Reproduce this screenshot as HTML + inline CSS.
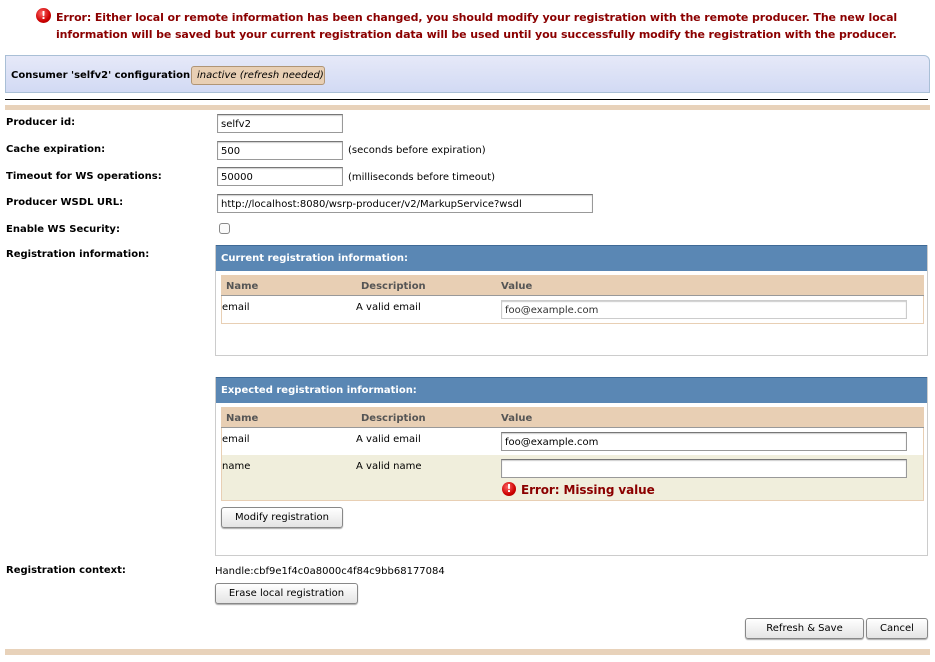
<!DOCTYPE html>
<html><head><meta charset="utf-8"><style>
*{box-sizing:border-box;margin:0;padding:0}
body{width:935px;height:662px;background:#fff;position:relative;font-family:"DejaVu Sans","Liberation Sans",sans-serif;font-size:10px;color:#000;overflow:hidden}
.a{position:absolute;white-space:nowrap}
.b{font-weight:bold}
.lbl{position:absolute;left:6px;font-weight:bold;font-size:10px;white-space:nowrap}
.inp{position:absolute;border:1px solid #999;border-top-color:#777;background:#fff;height:19px;font-size:10px;padding:4px 3px 0;white-space:nowrap;box-shadow:inset 0 1px 1px #ccc}
.btn{position:absolute;border:1px solid #888;border-radius:3px;background:linear-gradient(#fff,#e4e4e4);font-size:10px;text-align:center;line-height:19px;height:21px;box-shadow:0 1px 1px #aaa}
.icon{position:absolute;width:15px;height:15px;border-radius:50%;background:radial-gradient(circle at 40% 35%,#f66,#c00 60%,#900);color:#fff;font-weight:bold;font-size:11px;text-align:center;line-height:15px}
.err{color:#8b0000;font-weight:bold;font-size:11px;letter-spacing:-0.1px}
.panel{position:absolute;left:215px;width:713px;border:1px solid #ccc;border-top:none}
.ph{height:26px;background:#5a87b4;border-top:1px solid #3f6a96;color:#fff;font-weight:bold;padding:7px 5px 0}
.th{position:absolute;left:5px;width:703px;height:21px;background:#e8cfb4;border-bottom:1px solid #999;color:#555;font-weight:bold}
.th span,.tr span{position:absolute;top:6px}
.tr{position:absolute;left:5px;width:703px;border-left:1px solid #e8cfb4;border-right:1px solid #e8cfb4}
</style></head><body>
<div class="icon" style="left:36px;top:8px">!</div>
<div class="a err" style="left:56px;top:11px">Error: Either local or remote information has been changed, you should modify your registration with the remote producer. The new local</div>
<div class="a err" style="left:56px;top:28px">information will be saved but your current registration data will be used until you successfully modify the registration with the producer.</div>

<div class="a" style="left:5px;top:55px;width:925px;height:38px;border:1px solid #a9bfd6;border-radius:0 6px 0 0;background:linear-gradient(#e6e9f8,#d2daf4)"></div>
<div class="a b" style="left:11px;top:70px">Consumer 'selfv2' configuration</div>
<div class="a" style="left:191px;top:66px;width:134px;height:19px;background:#e8cfb4;border:1px solid #b09575;border-radius:3px;font-style:italic;padding:3px 0 0 5px">inactive (refresh needed)</div>
<div class="a" style="left:5px;top:99px;width:923px;height:1px;background:#000"></div>
<div class="a" style="left:5px;top:105px;width:925px;height:5px;background:#e8d2ba"></div>

<div class="lbl" style="top:117px">Producer id:</div>
<div class="inp" style="left:217px;top:114px;width:126px">selfv2</div>
<div class="lbl" style="top:144px">Cache expiration:</div>
<div class="inp" style="left:217px;top:141px;width:126px">500</div>
<div class="a" style="left:348px;top:145px">(seconds before expiration)</div>
<div class="lbl" style="top:171px">Timeout for WS operations:</div>
<div class="inp" style="left:217px;top:167px;width:126px">50000</div>
<div class="a" style="left:348px;top:172px">(milliseconds before timeout)</div>
<div class="lbl" style="top:197px">Producer WSDL URL:</div>
<div class="inp" style="left:217px;top:194px;width:376px">http://localhost:8080/wsrp-producer/v2/MarkupService?wsdl</div>
<div class="lbl" style="top:224px">Enable WS Security:</div>
<div class="a" style="left:219px;top:223px;width:11px;height:11px;border:1px solid #888;border-radius:3px;background:#fafafa"></div>
<div class="lbl" style="top:249px">Registration information:</div>

<div class="panel" style="top:245px;height:111px">
<div class="ph">Current registration information:</div>
<div class="th" style="top:30px"><span style="left:5px">Name</span><span style="left:140px">Description</span><span style="left:280px">Value</span></div>
<div class="tr" style="top:51px;height:28px;border-bottom:1px solid #e8cfb4"><span style="left:0">email</span><span style="left:134px">A valid email</span></div>
<div class="inp" style="left:285px;top:55px;width:406px;color:#333;border-color:#ccc">foo@example.com</div>
</div>

<div class="panel" style="top:377px;height:179px">
<div class="ph">Expected registration information:</div>
<div class="th" style="top:30px"><span style="left:5px">Name</span><span style="left:140px">Description</span><span style="left:280px">Value</span></div>
<div class="tr" style="top:51px;height:27px"><span style="left:0">email</span><span style="left:134px">A valid email</span></div>
<div class="tr" style="top:78px;height:46px;background:#f0eedc;border-bottom:1px solid #e8cfb4"><span style="left:0">name</span><span style="left:134px">A valid name</span></div>
<div class="inp" style="left:285px;top:55px;width:406px">foo@example.com</div>
<div class="inp" style="left:285px;top:82px;width:406px"></div>
<div class="icon" style="left:286px;top:105px;width:14px;height:14px;line-height:14px">!</div>
<div class="a err" style="left:305px;top:106px;font-size:12px">Error: Missing value</div>
<div class="btn" style="left:5px;top:130px;width:122px">Modify registration</div>
</div>

<div class="lbl" style="top:565px">Registration context:</div>
<div class="a" style="left:215px;top:566px">Handle:cbf9e1f4c0a8000c4f84c9bb68177084</div>
<div class="btn" style="left:215px;top:583px;width:143px">Erase local registration</div>
<div class="btn" style="left:745px;top:618px;width:119px">Refresh &amp; Save</div>
<div class="btn" style="left:866px;top:618px;width:62px">Cancel</div>
<div class="a" style="left:5px;top:649px;width:925px;height:6px;background:#e8d2ba"></div>
</body></html>
